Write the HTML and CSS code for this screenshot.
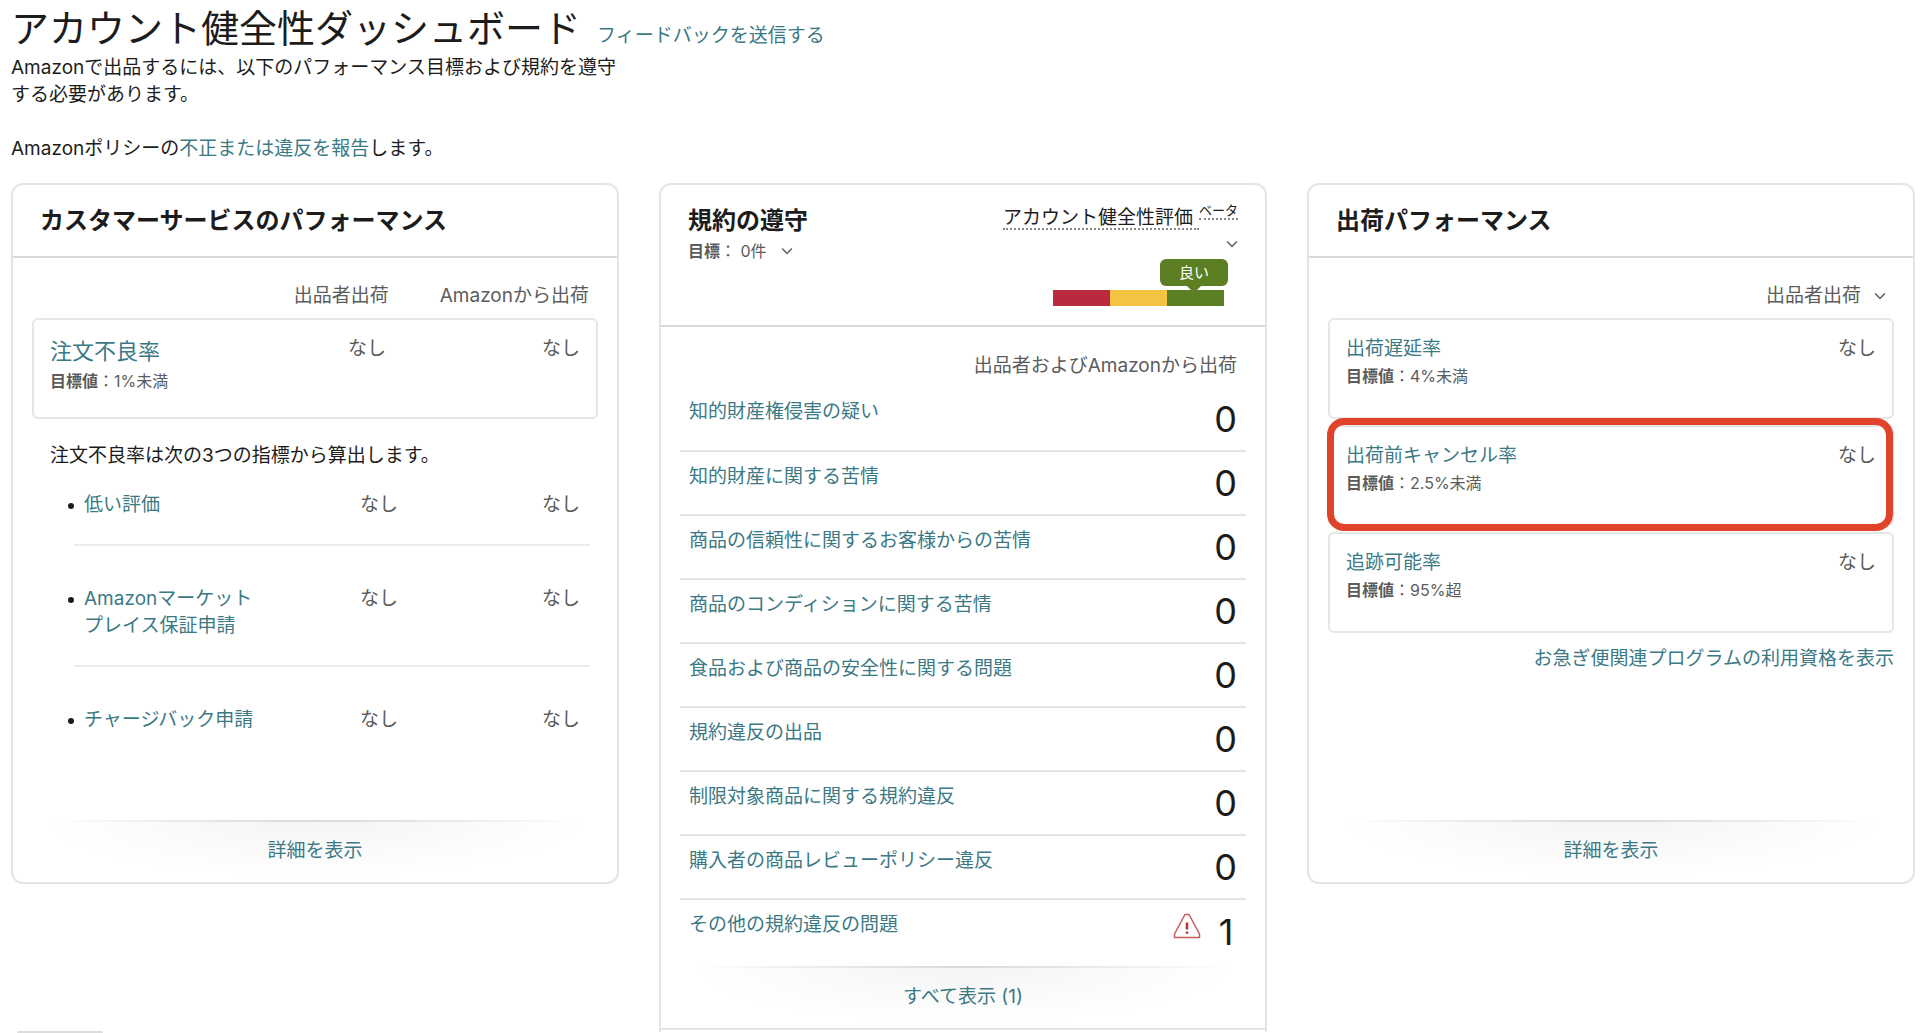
FILE: index.html
```html
<!DOCTYPE html>
<html lang="ja">
<head>
<meta charset="utf-8">
<meta name="viewport" content="width=device-width, initial-scale=1">
<title>アカウント健全性ダッシュボード</title>
<link rel="stylesheet" href="styles.css">
</head>
<body>
<header class="page-head">
  <div class="title-row">
    <h1>アカウント健全性ダッシュボード</h1>
    <a href="#">フィードバックを送信する</a>
  </div>
  <p class="intro">Amazonで出品するには、以下のパフォーマンス目標および規約を遵守する必要があります。</p>
  <p>Amazonポリシーの<a href="#">不正または違反を報告</a>します。</p>
</header>

<main class="cards">
  <section class="card">
    <div class="card-head"><h2>カスタマーサービスのパフォーマンス</h2></div>
    <div class="columns">
      <span>出品者出荷</span>
      <span>Amazonから出荷</span>
    </div>
    <div class="metric">
      <div class="metric-name">
        <a class="metric-link large" href="#">注文不良率</a>
        <p class="target"><b>目標値</b>：1%未満</p>
      </div>
      <span class="value">なし</span>
      <span class="value second">なし</span>
    </div>
    <p class="note">注文不良率は次の3つの指標から算出します。</p>
    <ul class="factors">
      <li><a href="#">低い評価</a><span class="value">なし</span><span class="value">なし</span></li>
      <li><a href="#">Amazonマーケット<wbr>プレイス保証申請</a><span class="value">なし</span><span class="value">なし</span></li>
      <li><a href="#">チャージバック申請</a><span class="value">なし</span><span class="value">なし</span></li>
    </ul>
    <div class="card-foot"><a href="#">詳細を表示</a></div>
  </section>

  <section class="card open-ended">
    <div class="card-head policy-head">
      <div>
        <h2>規約の遵守</h2>
        <button class="goal" type="button"><span><b>目標</b>： 0件</span>
          <svg class="chevron" viewBox="0 0 10 6" aria-hidden="true"><path d="M1 1l4 4 4-4"/></svg>
        </button>
      </div>
      <div class="rating">
        <div class="rating-name"><span class="dotted">アカウント健全性評価</span><span class="dotted beta">ベータ</span></div>
        <button class="rating-toggle" type="button" aria-label="評価の詳細">
          <svg class="chevron" viewBox="0 0 10 6" aria-hidden="true"><path d="M1 1l4 4 4-4"/></svg>
        </button>
        <div class="meter">
          <i class="bad"></i><i class="fair"></i><i class="good"><span class="badge">良い</span></i>
        </div>
      </div>
    </div>
    <p class="channel">出品者およびAmazonから出荷</p>
    <table class="issues">
      <tbody>
        <tr><th scope="row"><a href="#">知的財産権侵害の疑い</a></th><td>0</td></tr>
        <tr><th scope="row"><a href="#">知的財産に関する苦情</a></th><td>0</td></tr>
        <tr><th scope="row"><a href="#">商品の信頼性に関するお客様からの苦情</a></th><td>0</td></tr>
        <tr><th scope="row"><a href="#">商品のコンディションに関する苦情</a></th><td>0</td></tr>
        <tr><th scope="row"><a href="#">食品および商品の安全性に関する問題</a></th><td>0</td></tr>
        <tr><th scope="row"><a href="#">規約違反の出品</a></th><td>0</td></tr>
        <tr><th scope="row"><a href="#">制限対象商品に関する規約違反</a></th><td>0</td></tr>
        <tr><th scope="row"><a href="#">購入者の商品レビューポリシー違反</a></th><td>0</td></tr>
        <tr><th scope="row"><a href="#">その他の規約違反の問題</a></th><td><div class="count">
          <svg class="warning" viewBox="0 0 28 26" role="img" aria-label="警告"><path class="outline" d="M12 1.500h4L26.500 21v3.500h-25V21z"/><path class="mark" d="M14 9.500v7M14 18.500v2.200"/></svg><span class="number">1</span></div></td></tr>
      </tbody>
    </table>
    <div class="card-foot"><a href="#">すべて表示 (1)</a></div>
  </section>

  <section class="card">
    <div class="card-head"><h2>出荷パフォーマンス</h2></div>
    <div class="channel-pick">
      <select aria-label="出荷方法"><option>出品者出荷</option></select>
      <svg class="chevron" viewBox="0 0 10 6" aria-hidden="true"><path d="M1 1l4 4 4-4"/></svg>
    </div>
    <div class="metric-list">
      <div class="metric">
        <div class="metric-name">
          <a class="metric-link" href="#">出荷遅延率</a>
          <p class="target"><b>目標値</b>：4%未満</p>
        </div>
        <span class="value">なし</span>
      </div>
      <div class="metric marked">
        <div class="metric-name">
          <a class="metric-link" href="#">出荷前キャンセル率</a>
          <p class="target"><b>目標値</b>：2.5%未満</p>
        </div>
        <span class="value">なし</span>
      </div>
      <div class="metric">
        <div class="metric-name">
          <a class="metric-link" href="#">追跡可能率</a>
          <p class="target"><b>目標値</b>：95%超</p>
        </div>
        <span class="value">なし</span>
      </div>
    </div>
    <a class="program-link" href="#">お急ぎ便関連プログラムの利用資格を表示</a>
    <div class="card-foot"><a href="#">詳細を表示</a></div>
  </section>
</main>
<div class="bottom-tab"></div>
</body>
</html>
```
FILE: styles.css
```css
* { box-sizing: border-box; }

body {
  margin: 0;
  padding: 4px 5px 0 11px;
  background: #fff;
  color: #1c1c1c;
  font: 19px/27px Inter, "Noto Sans CJK JP", sans-serif;
}

h1, h2, p, ul { margin: 0; padding: 0; font-weight: 400; }
a { color: #3b7985; text-decoration: none; }
a:hover { text-decoration: underline; }
button, select {
  appearance: none;
  margin: 0;
  padding: 0;
  border: 0;
  background: none;
  color: #5c5c5c;
  font: inherit;
}

.page-head { padding-bottom: 21px; }
.title-row { display: flex; align-items: baseline; gap: 16px; height: 50px; }
h1 { font-size: 38px; line-height: 48px; }
.intro { max-width: 609px; margin-bottom: 27px; }

.cards {
  display: grid;
  grid-template-columns: repeat(3, minmax(0, 1fr));
  gap: 40px;
  align-items: start;
}
.card {
  display: flex;
  flex-direction: column;
  min-height: 701px;
  border: 2px solid #e4e4e4;
  border-radius: 12px;
}
.open-ended { border-bottom: 0; border-radius: 12px 12px 0 0; padding-bottom: 2px; }
.card-head {
  padding: 19px 27px 18px;
  border-bottom: 2px solid #d8d8d8;
}
h2 { font-size: 24px; line-height: 34px; font-weight: 700; }

.columns {
  display: flex;
  justify-content: flex-end;
  gap: 51px;
  padding: 24px 28px 9px;
  color: #5c5c5c;
}
.metric {
  display: flex;
  min-height: 101px;
  margin: 0 19px;
  padding: 15px 16px 0 16px;
  border: 2px solid #e6e6e6;
  border-radius: 6px;
}
.metric-name { flex: 1; }
.metric-link { display: block; }
.metric-link.large { font-size: 22px; line-height: 32px; }
.target { margin-top: 2px; color: #5c5c5c; font-size: 16px; line-height: 24px; }
.value { color: #5c5c5c; text-align: right; }
.value.second { width: 194px; }

.note { padding: 23px 37px 0; }
.factors { margin: 22px 27px 0 61px; list-style: none; }
.factors li {
  display: grid;
  grid-template-columns: 179px 1fr 182px;
  align-items: start;
  padding: 39px 10px 26px;
  border-bottom: 2px solid #ececec;
}
.factors li:first-child { padding-top: 0; }
.factors li:last-child { border-bottom: 0; }
.factors a { position: relative; }
.factors a::before {
  content: "";
  position: absolute;
  left: -16px;
  top: 12px;
  width: 6px;
  height: 6px;
  border-radius: 50%;
  background: #1c1c1c;
}

.card-foot {
  margin: auto 36px 0;
  padding: 17px 0 18px;
  text-align: center;
  background:
    linear-gradient(90deg, transparent, #dadada 50%, transparent) top / 100% 2px no-repeat,
    radial-gradient(50% 90% at 50% 0, #f4f4f4, transparent) no-repeat;
}
.open-ended .card-foot {
  margin: 3px 0 0;
  border-bottom: 2px solid #e4e4e4;
  background:
    linear-gradient(90deg, transparent, #dadada 50%, transparent) top / 88% 2px no-repeat,
    radial-gradient(44% 90% at 50% 0, #f4f4f4, transparent) no-repeat;
}

.chevron { width: 12px; height: 8px; fill: none; stroke: #5c5c5c; stroke-width: 1.2; }

.policy-head { display: flex; justify-content: space-between; }
.goal { display: flex; align-items: center; gap: 14px; font-size: 16px; line-height: 24px; margin-top: 1px; }
.rating { display: flex; flex-direction: column; align-items: flex-end; }
.rating-name { display: flex; align-items: flex-start; line-height: 28px; }
.dotted { height: 26px; padding-right: 6px; border-bottom: 2px dotted #888; }
.beta { height: 16px; padding: 0; font-size: 13px; line-height: 12px; }
.rating-toggle { height: 26px; line-height: 8px; }
.meter { display: flex; margin: 34px 14px 1px 0; }
.meter i { width: 57px; height: 16px; font-style: normal; }
.bad { background: #ba293f; }
.fair { background: #f4c342; }
.good { position: relative; background: #5d7f24; }
.badge {
  position: absolute;
  right: -4px;
  bottom: 20px;
  width: 68px;
  border-radius: 6px;
  background: #5d7f24;
  color: #fff;
  font-size: 15px;
  line-height: 27px;
  text-align: center;
}
.badge::after {
  content: "";
  position: absolute;
  left: 27px;
  top: 100%;
  border: 7px solid transparent;
  border-top-color: #5d7f24;
  border-bottom: 0;
}

.channel { padding: 25px 28px 8px; text-align: right; color: #5c5c5c; }
.issues { margin: 0 19px; border-collapse: collapse; }
.issues tr { height: 64px; }
.issues tr + tr { border-top: 2px solid #e4e4e4; }
.issues th { padding: 11px 9px 0; text-align: left; vertical-align: top; font-weight: 400; }
.issues td { padding: 0 9px; text-align: right; font-size: 36px; line-height: 44px; }
.count { display: flex; justify-content: flex-end; align-items: flex-start; gap: 14px; }
.number { width: 22px; text-align: center; }
.warning { width: 28px; height: 26px; margin-top: 3px; fill: none; }
.outline { stroke: #c75a5a; stroke-width: 1.5; stroke-linejoin: round; }
.mark { stroke: #b03a3a; stroke-width: 2.5; }

.channel-pick {
  display: flex;
  justify-content: flex-end;
  align-items: center;
  gap: 12px;
  padding: 24px 27px 9px;
}
.metric-list { display: grid; gap: 6px; }
.marked { position: relative; }
.marked::after {
  content: "";
  position: absolute;
  inset: -9px -1px -7px -3px;
  border: 7px solid #e0432a;
  border-radius: 17px;
  pointer-events: none;
}
.program-link { align-self: flex-end; margin: 12px 19px 0; }

.bottom-tab {
  position: fixed;
  left: 17px;
  bottom: 0;
  width: 86px;
  height: 2px;
  border-radius: 2px 2px 0 0;
  background: #dcdcdc;
}
```
